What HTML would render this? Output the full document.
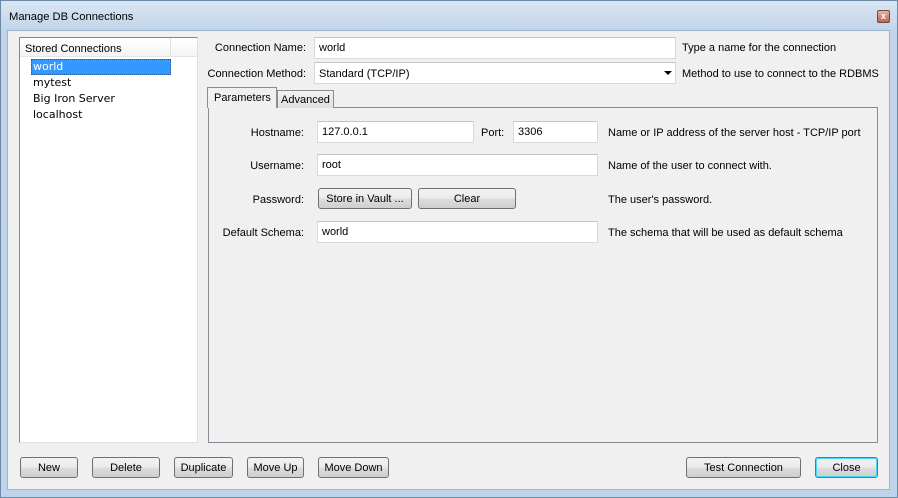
<!DOCTYPE html>
<html><head><style>
*{box-sizing:border-box;margin:0;padding:0}
body{width:898px;height:498px;overflow:hidden;font-family:"Liberation Sans","DejaVu Sans",sans-serif;font-size:11px;color:#000;background:#c3d6ea}
.win{position:absolute;left:0;top:0;width:898px;height:498px;border:1px solid #6c8aa8;background:linear-gradient(#dae6f3,#c1d4e8 30px,#c0d4e9)}
.title{position:absolute;left:8px;top:10px;font-size:11.2px;color:#000}
.xbtn{position:absolute;left:876px;top:9px;width:13px;height:13px;border:1px solid #6d4a44;background:linear-gradient(#e8b4a8,#c0604c);border-radius:2px;font-size:9px;line-height:10px;text-align:center;color:#fff;font-weight:bold}
.client{position:absolute;left:7px;top:30px;width:883px;height:460px;background:#f0f0f0;border:1px solid #9db3cb}
.a{position:absolute;white-space:nowrap}
.lbl{position:absolute;text-align:right;white-space:nowrap}
.inp{position:absolute;background:#fff;border:1px solid #d9d9d9;border-top-color:#c4c4c4;padding:4px 0 0 4px;height:22px}
.btn{position:absolute;height:21px;border:1px solid #707070;border-radius:3px;background:linear-gradient(#f2f2f2 0%,#ebebeb 50%,#dddddd 51%,#cfcfcf 100%);text-align:center;line-height:21px}
.help{position:absolute;white-space:nowrap}
.mono{font-family:'DejaVu Sans',sans-serif;font-size:11px}
</style></head><body>
<div class="win">
<div class="title">Manage DB Connections</div>
<div class="xbtn">x</div>
</div>
<div class="client"></div>

<div class="a" style="left:19px;top:37px;width:179px;height:406px;background:#fff;border:1px solid #828790;border-right-color:#e0e0e0;border-bottom-color:#e0e0e0"></div>
<div class="a" style="left:20px;top:38px;width:177px;height:19px;background:linear-gradient(#fff,#f4f4f4);border-bottom:1px solid #e5e5e5"></div>
<div class="a" style="left:170px;top:38px;width:1px;height:19px;background:#e0e0e0"></div>
<div class="a" style="left:25px;top:43px">Stored Connections</div>
<div class="a" style="left:31px;top:59px;width:140px;height:16px;background:#3399ff;border:1px dotted #1a5a9a"></div>
<div class="a mono" style="left:33px;top:60px;color:#fff">world</div>
<div class="a mono" style="left:33px;top:76px">mytest</div>
<div class="a mono" style="left:33px;top:92px">Big Iron Server</div>
<div class="a mono" style="left:33px;top:108px">localhost</div>

<div class="lbl" style="right:592px;top:42px">Connection Name:</div>
<div class="inp" style="left:314px;top:37px;width:362px">world</div>
<div class="help" style="left:682px;top:42px">Type a name for the connection</div>
<div class="lbl" style="right:592px;top:68px">Connection Method:</div>
<div class="inp" style="left:314px;top:62px;width:362px;padding-top:5px">Standard (TCP/IP)</div>
<div class="a" style="left:664px;top:71px;width:0;height:0;border-left:4px solid transparent;border-right:4px solid transparent;border-top:4px solid #000"></div>
<div class="help" style="left:682px;top:68px">Method to use to connect to the RDBMS</div>

<div class="a" style="left:208px;top:107px;width:670px;height:336px;border:1px solid #898c95;background:#f0f0f0"></div>
<div class="a" style="left:277px;top:90px;width:57px;height:18px;border:1px solid #898c95;border-bottom:none;background:linear-gradient(#f2f2f2,#e0e0e0)"></div>
<div class="a" style="left:281px;top:94px">Advanced</div>
<div class="a" style="left:207px;top:87px;width:70px;height:21px;border:1px solid #898c95;border-bottom:none;background:#f0f0f0"></div>
<div class="a" style="left:214px;top:92px">Parameters</div>

<div class="lbl" style="right:594px;top:127px">Hostname:</div>
<div class="inp" style="left:317px;top:121px;width:157px">127.0.0.1</div>
<div class="a" style="left:481px;top:127px">Port:</div>
<div class="inp" style="left:513px;top:121px;width:85px">3306</div>
<div class="help" style="left:608px;top:127px">Name or IP address of the server host - TCP/IP port</div>

<div class="lbl" style="right:594px;top:160px">Username:</div>
<div class="inp" style="left:317px;top:154px;width:281px">root</div>
<div class="help" style="left:608px;top:160px">Name of the user to connect with.</div>

<div class="lbl" style="right:594px;top:194px">Password:</div>
<div class="btn" style="left:318px;top:188px;width:94px">Store in Vault ...</div>
<div class="btn" style="left:418px;top:188px;width:98px">Clear</div>
<div class="help" style="left:608px;top:194px">The user's password.</div>

<div class="lbl" style="right:594px;top:227px">Default Schema:</div>
<div class="inp" style="left:317px;top:221px;width:281px">world</div>
<div class="help" style="left:608px;top:227px">The schema that will be used as default schema</div>

<div class="btn" style="left:20px;top:457px;width:58px">New</div>
<div class="btn" style="left:92px;top:457px;width:68px">Delete</div>
<div class="btn" style="left:174px;top:457px;width:59px">Duplicate</div>
<div class="btn" style="left:247px;top:457px;width:57px">Move Up</div>
<div class="btn" style="left:318px;top:457px;width:71px">Move Down</div>
<div class="btn" style="left:686px;top:457px;width:115px">Test Connection</div>
<div class="btn" style="left:815px;top:457px;width:63px;border-color:#3c7fb1;box-shadow:inset 0 0 0 1px #48d8fb">Close</div>
</body></html>
